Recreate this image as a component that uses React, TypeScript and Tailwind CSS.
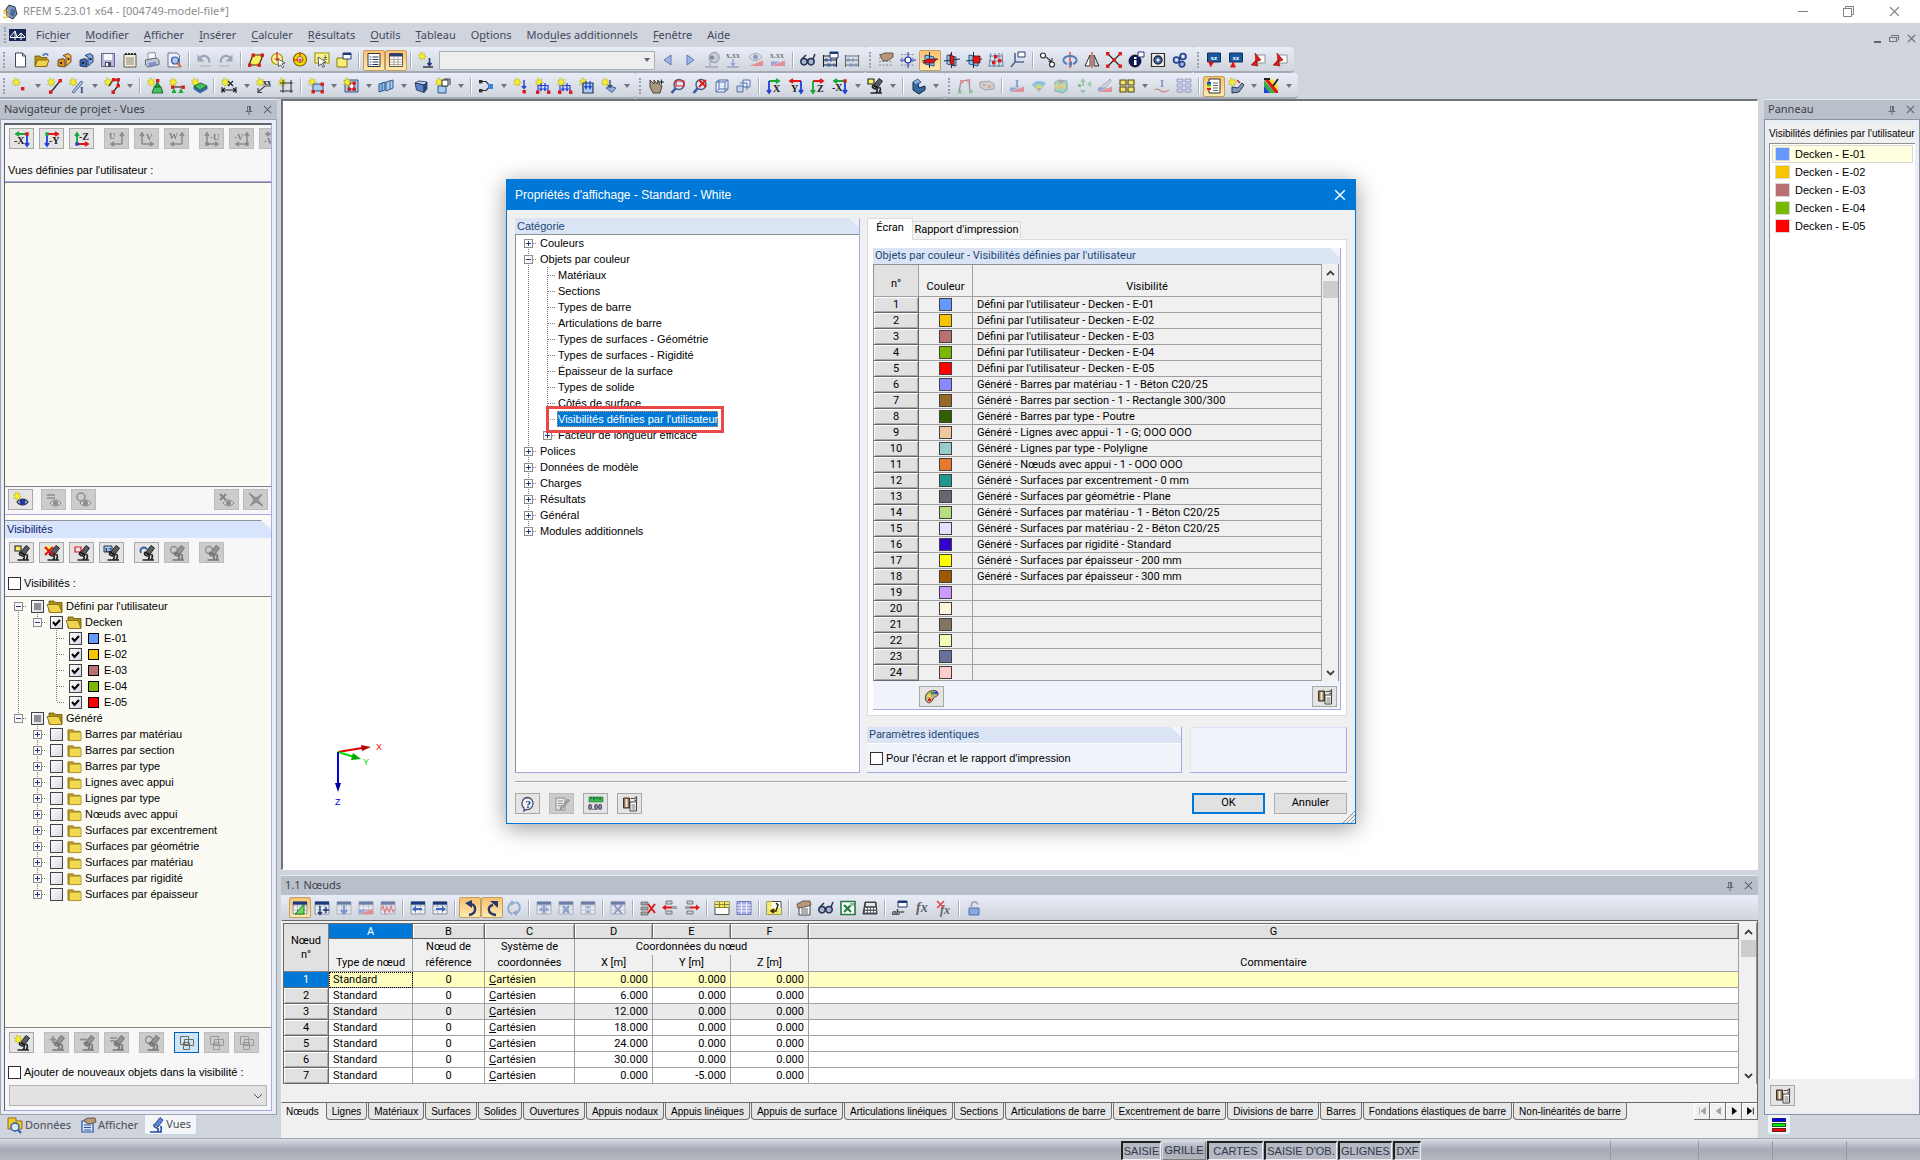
import type { ReactNode } from "react";

/* ---------- icon drawings: [path, fill, stroke, stroke width] on a 16×16 grid ---------- */
type Shape = [string, string?, string?, number?] | { t: string; x: number; y: number; c?: string; s?: number };

const RED = "#e01818";
const GRN = "#18a838";
const BLU = "#2040d8";
const NAVY = "#1c3a78";
const star: Shape = ["M4 0l.9 2.2 2.3-.9-.9 2.2 2.1 1-2.2.8.7 2.3L4.8 6.5 3.6 8.3 3 6.1.7 6.4 2 4.5.2 3l2.3-.2L2.3.6z", "#f7ef2c", "#b0a820", 0.5];
const n = (x: number, y: number, c = RED): Shape => [`M${x} ${y}h3.4v3.4h-3.4z`, c];
const ln = (d: string, c = "#404040", w = 1.3): Shape => [d, "none", c, w];
const tx = (t: string, x: number, y: number, c = "#202020", s = 8): Shape => ({ t, x, y, c, s });
const grid: Shape[] = [["M1 2h14v12H1z", "#f2f3f6", "#8a8f9a", 1], ln("M1 6h14M1 10h14M5.5 3v11M10.5 3v11", "#a6abb8", 0.8), ["M1 1.5h14v3.2H1z", NAVY]];
const scope: Shape[] = [["M12 .5l3.5 2.5-5 7-4-2.5z", "#585c60", "#181818", 0.9], ln("M6.5 7.5l5 3", "#101010", 1.8), ln("M6.500 7c-2.5 2 0 3.500 2.500 4 2 .8 1.5 2.5 0 3.5M12.500 9c1.500 2 1 4-.5 6M3.500 15h11.500", "#202428", 1.7)];
const fold: Shape[] = [["M1 3h5.5l1 1.500H14V14H1z", "#c8a018", "#7a6820", 0.8], ["M2.500 5.500H15V14.500H2.500z", "#f2da50", "#a08828", 0.8]];
const dots: Shape = ["M1 2.5h14M1 6h14M1 9.5h14M1 13h14", "none", "#85898f", 1];
const beam: Shape[] = [["M1 14l14-5.5V14z", "#e86060"], ["M1 14V9.5h9z", "#6a80d8"]];
const cubeBlue: Shape[] = [["M2 5l4-2 8 1-3 3z", "#bcd4f4", "#203050", 0.8], ["M2 5l9 2v7.5L3.5 12z", "#5a86c8", "#203050", 0.8], ["M11 7l3-3v7l-3 3.5z", "#2c4c88", "#203050", 0.8]];
const loads: Shape[] = [ln("M3 14V7.5h10V14", BLU, 1.2), ln("M6 5v7M10 5v7M4.5 10.5L6 12.5l1.5-2M8.5 10.5l1.5 2 1.5-2", BLU, 1.2), n(1, 12.5), n(12, 12.5)];
const lens: Shape[] = [["M9 1.5a5 5 0 1 1 0 10 5 5 0 0 1 0-10z", "#dbe8fa", "#485878", 1.4], ln("M5.5 10.5L1.5 15", "#3858b0", 2.6)];
const plane: Shape[] = [["M3 3l9 2v9l-9-2z", "#8cc8f0", "#205888", 1], ln("M7.5 0v16M0 9l16-2", "#103050", 1)];
const abacus: Shape[] = [ln("M1.5 3v12M14.5 3v12M1 8h14M1 13h14M1 4h14", "#202020", 1.1), ["M3 6.5h3v3H3zM8 6.5h2v3H8zM11 11.5h2v3h-2zM5 11.5h4v3H5z", "#4868a8"]];
const arrL = (x: number, y: number, c: string): Shape => [`M${x} ${y}l4-3v2h6v2h-6v2z`, c];
const eye: Shape[] = [["M4 11c3-4 8-4 11 0-3 4-8 4-11 0z", "#dcdcdc", "#404040", 1], ["M9.5 8.5a2.5 2.5 0 1 1 0 5 2.5 2.5 0 0 1 0-5z", "#505050"]];

const I: Record<string, Shape[]> = {
  newdoc: [["M3.5 1h7l3 3v11h-10z", "#fff", "#404858", 1], ln("M10.5 1v3h3", "#404858", 1)],
  open: [["M1 4h5l1 1.5h6V14H1z", "#b89018", "#705800", 0.8], ["M3.5 8H15l-2.5 6.5H1z", "#f0d050", "#705800", 0.8], ln("M9 4c1-3 4-3 5-.5", "#4068b0", 1.6)],
  boxo: [["M2 8l5-1.5 2 1.5v7l-7-1z", "#d89028", "#503810", 0.8], ["M7 3.5l5-2 3 2V10l-5 4V5z", "#f0b050", "#503810", 0.8], ["M4 10h2v2H4zM11.5 6h2v2h-2z", "#402808"]],
  boxb: [["M2 8l5-1.5 2 1.5v7l-7-1z", "#4068b0", "#182848", 0.8], ["M7 3.5l5-2 3 2V10l-5 4V5z", "#80a8e8", "#182848", 0.8], ["M4 10h2v2H4zM11.5 6h2v2h-2z", "#101c38"]],
  save: [["M1.5 1.5h13v13h-13z", "#b8b4dc", "#68648c", 1], ["M4 2h8v6H4z", "#f6f6fc"], ["M5 10h6v4.5H5z", "#484860"], ["M6 11h2v3H6z", "#fff"]],
  sheet: [["M2 2.5h12V15H2z", "#f4f0e0", "#605840", 1], ln("M4 6h8M4 8h8M4 10h8M4 12h8", "#807860", 0.9), ln("M3 2h2M6 2h2M9 2h2M12 2h2", "#303030", 2)],
  print: [["M4 1l7-.5 1 6-8 1z", "#f4f6fa", "#707888", 0.8], ["M1.5 8l11-2 2.5 2.5v4L4 15l-2.5-2z", "#c4c8d4", "#505868", 0.9], ["M4 11l8-1.5V13l-7 1.5z", "#8090c8"]],
  preview: [["M2 1h9l2.5 2.5V15H2z", "#eef2f8", "#606878", 0.9], ["M9 5a3.5 3.5 0 1 1 0 7 3.5 3.5 0 0 1 0-7z", "#a8c8f0", "#3050a0", 1.2], ln("M11.5 11l3.5 4", "#d07030", 2)],
  undo: [ln("M4 5.5c5-4 10 0 9 5", "#9aa4b8", 2.2), ["M1.5 2.5v7h7z", "#9aa4b8"], ln("M4 14h11", "#b4bac8", 1.3)],
  redo: [ln("M12 5.5c-5-4-10 0-9 5", "#9aa4b8", 2.2), ["M14.5 2.5v7h-7z", "#9aa4b8"], ln("M1 14h11", "#b4bac8", 1.3)],
  selpar: [["M5 3h10l-4 10H1z", "#f6f060", "#303008", 1.2], n(3.5, 1.5), n(12.5, 1.5), n(0, 11.5), n(9.5, 11.5)],
  selcirc: [["M7 1.5a5.5 5.5 0 1 1 0 11 5.5 5.5 0 0 1 0-11z", "#fbf59a", "#a09000", 1.2], ln("M7 0v5M4.5 7h5M7 5v4", RED, 1.2), ["M8 7l7 4-3 .8 2 3-1.5 1-2-3-2 2z", "#fff", "#404040", 0.8]],
  selring: [["M8 1a6.5 6.5 0 1 1 0 13A6.5 6.5 0 0 1 8 1z", "#f6d800", "#806800", 1.2], ["M8 4.5a3 3 0 1 1 0 6 3 3 0 0 1 0-6z", "#fff", "#806800", 1], ln("M8 0v4M1 8h5M8 6v4M6 8h5", RED, 1.1)],
  selbox: [["M1 1h14v10H1z", "#fbf59a", "#a09800", 1.2], ["M4 5l8 5-3.5 1 2 3.5-1.5.8-2-3.4-2.3 2z", "#fff", "#303030", 0.8], tx("±", 9, 8)],
  selyel: [["M1 6h10v9H1z", "#f8f070", "#807810", 1], ["M7 1h8v6H7z", "#fff", "#303878", 1], ["M7 1h8v2H7z", NAVY]],
  tlist: [["M2 1.5h12v13H2z", "#fff", "#303848", 1], ln("M6.5 5h6M6.5 7.5h6M6.5 10h6M6.5 12.5h6", "#303848", 1), ln("M3.5 5h2M3.5 7.5h2M3.5 10h2M3.5 12.5h2", "#3868c0", 1.2)],
  ttab: [["M1.5 1.5h13v13h-13z", "#fff", "#605848", 1], ["M1.5 1.5h13v3h-13z", "#28406c"], ln("M2 7.5h12.5M2 10h12.5M2 12.5h12.5M6 5v9.5M10 5v9.5", "#a09888", 0.8)],
  loadnew: [star, ln("M11.5 6v7M9.5 11l2 2.5 2-2.5", NAVY, 1.6), ln("M5 15h10", "#303030", 1.4)],
  tril: [["M11 3v10L4 8z", "#a0b4e0", "#6078b8", 1]],
  trir: [["M5 3v10l7-5z", "#a0b4e0", "#6078b8", 1]],
  eyep: [["M8 1a5 5 0 1 1 0 9 5 5 0 0 1 0-9z", "#b8c0cc", "#707888", 1.2], ["M8 3.5a2 2 0 1 1 0 4 2 2 0 0 1 0-4z", "#404858"], ln("M6 10v4M1 15h13", "#808898", 1.3)],
  xxl: [tx("x.xx", 0, 5.5, "#303030", 8), ln("M7 7v6M5 11l2 2.5 2-2.5M1 15h12", "#6880b8", 1.3)],
  eyeb: [["M1 5c4-5 9-5 13 0-4 5-9 5-13 0z", "#d4dae4", "#808898", 1], ["M7.5 2.5a2.5 2.5 0 1 1 0 5 2.5 2.5 0 0 1 0-5z", "#5870a8"], ...beam.slice(0, 1)],
  xxb: [tx("x.xx", 0, 6, "#303030", 8), ...beam],
  glasses: [["M4 6.5a3.2 3.2 0 1 1 0 6.4 3.2 3.2 0 0 1 0-6.4zM11 6.5a3.2 3.2 0 1 1 0 6.4 3.2 3.2 0 0 1 0-6.4z", "#a8b4d0", "#283050", 1.5], ln("M2 7l4-4M13 7l2-5", "#283050", 1.5)],
  abacus,
  abacusn: [...abacus, ["M8 0h8v6H8z", "#fff", NAVY, 1], ["M8 0h8v2H8z", NAVY]],
  handgrid: [dots, ["M2 3l5-2h8v4l-4 3-6 1z", "#b89878", "#504030", 0.8]],
  snap: [dots, ln("M8 0v16M0 8h16", "#2030a8", 1), ["M8 5a3 3 0 1 1 0 6 3 3 0 0 1 0-6z", "#fff", "#2030a8", 1.2]],
  pl1: [...plane, ["M1 11l4-4h10l-4 4z", RED, "#601010", 0.8]],
  pl2: [...plane, ["M6 2l4 3v9l-4-3z", RED, "#601010", 0.8]],
  pl3: [...plane, ["M7 4h7v7H7z", RED, "#601010", 0.8]],
  net: [ln("M3 1l-2 14M7 1L6 15M11 1v14M14 1l1 14M1 4h13M1 9h14M1 14h14", "#5080a8", 0.9), n(6, 3), n(10, 7), n(4, 9)],
  axes: [ln("M5 1v9h9M5 10l-4 5", "#506890", 1.6), ["M8 0h7v5H8z", "#fff", "#303878", 1]],
  moveo: [["M3 1a2.5 2.5 0 1 1 0 5 2.5 2.5 0 0 1 0-5zM12 10a2.5 2.5 0 1 1 0 5 2.5 2.5 0 0 1 0-5z", "#fff", "#303030", 1.2], ln("M6 5l5 4M12 6v3.5H8.5", "#303030", 1.1)],
  rot: [ln("M8 0v16", RED, 1.1), ln("M5 12C-1 10 1 4 8 4s9 6 3 8", "#5080b8", 2), ["M10 9v5.5l-4-2.5z", "#5080b8"]],
  mirror: [ln("M8 0v16", RED, 1.1), ["M6 3v11H1z", "#fff", "#303030", 1], ["M10 3v11h5z", "#d0d0d0", "#303030", 1]],
  cross: [ln("M2 2l12 12M14 2L2 14", "#202020", 1.2), n(0, 0), n(12.5, 0), n(0, 12.5), n(12.5, 12.5), n(6.5, 6.5)],
  info: [["M7 3a6 6 0 1 1 0 12A6 6 0 0 1 7 3z", "#101858", "#000", 0.8], ["M6 8h2.5v5H6zM6 5h2.5v2H6z", "#fff"], ["M10 0h6v5h-6z", "#fff", "#303878", 1]],
  gearp: [["M1.5 1.5h13v13h-13z", "#f0ece0", "#303030", 1.2], ["M8 4a4 4 0 1 1 0 8 4 4 0 0 1 0-8z", "#4868a8", "#182848", 1.4], ["M8 6.5a1.5 1.5 0 1 1 0 3 1.5 1.5 0 0 1 0-3z", "#fff"]],
  gears: [["M11 1.5a3 3 0 1 1 0 6 3 3 0 0 1 0-6zM4.5 5a3 3 0 1 1 0 6 3 3 0 0 1 0-6zM10 9.5a2.7 2.7 0 1 1 0 5.4 2.7 2.7 0 0 1 0-5.4z", "#a0b4e0", "#28408c", 1.6], ["M10 3.5h2v2h-2zM3.5 7h2v2h-2z", "#fff"]],
  rx1: [["M1.5 1h13v9h-13z", "#1858a0", "#0c3060", 1], tx("xz", 4.5, 7.5, "#fff", 7), ["M2 9l6 1-3.5 5.5z", RED]],
  rx2: [["M1.5 1h13v9h-13z", "#1858a0", "#0c3060", 1], tx("xz", 4.5, 7.5, "#fff", 7), ["M8 15.5H2L5 9z", RED]],
  rx3: [["M7 3h8v8H7z", "#fff", "#909090", 1], ["M5 1l6 7-5 2zM1 13l5-5 2 6z", RED, "#801010", 0.6]],
  node: [star, n(9, 9)],
  line: [star, ln("M4 14L13 3", "#303030", 1.4), n(11.5, 1), n(2, 12.5)],
  member: [star, ["M3 14L12 3l2 1.5L5 15z", "#a8c4ec", "#385888", 0.8], tx("I", 11, 15, NAVY, 9)],
  poly: [star, ln("M5 8l4-6h5v6l-5 6", "#303030", 1.3), n(8, 0), n(12.5, 0), n(12.5, 6), n(7.5, 12.5)],
  sup: [star, n(9, 1), ["M10.5 4l3 5h-6z", GRN, "#0c5820", 0.8], ["M7 9h7l2 6H5z", "#48c060", "#0c5820", 0.8]],
  sup2: [star, ln("M3 9h12", "#303030", 1.2), n(2, 7.5), n(12.5, 7.5), ["M5 10l2.5 5h-5zM12 10l2.5 5h-5z", GRN]],
  surfs: [star, ["M3 8v3l6 4 7-4V8l-7 4z", "#3870c0", "#0c3060", 0.6], ["M3 8l7-3 6 3-7 4z", "#48c060", "#0c5820", 0.8]],
  dim: [star, ln("M1 9v6M15 9v6M1 12h14M4 10l-3 2 3 2M12 10l3 2-3 2", "#202020", 1.1), ln("M7 3l5 5M12 3L7 8", "#202020", 1.2)],
  xx: [star, tx("xx", 7, 7), ln("M15 8H9l-7 6M2 10v4.5h4", "#404040", 1.1)],
  frame: [star, ln("M5 2v13M13 2v13M2 5h13M2 13h13", "#303030", 1)],
  surf: [star, ["M5 6h10v7H5z", "#a8ccf0", "#305888", 1], n(3.5, 12), n(12.5, 4.5), n(12.5, 12)],
  opening: [["M2 2h13v12H2z", "#a8ccf0", "#305888", 1], ["M6 5h5v6H6z", "#fff", "#303030", 1], n(4.5, 3.5), n(9.5, 3.5), n(4.5, 9.5), n(9.5, 9.5), star],
  inter: [["M1 6l6-2v8l-6 2z", "#88b8e8", "#305888", 1], ["M8 4l7-2v8l-7 3z", "#a8ccf0", "#305888", 1], ln("M4 5v8M12 3v8", "#305888", 0.8)],
  solid: cubeBlue,
  solidn: [star, ["M3 8h8v7H3z", "#a8ccf0", "#305888", 1], ["M7 2h6v6H7z", "#fff", "#303030", 1], ln("M9 1h6v6", "#303030", 1)],
  rig: [n(1, 2, "#303030"), n(1, 11, "#303030"), ln("M4 3.5h4l4 4.5M4 12.5h4l3-3", "#303030", 1.2), ["M10 6h5v5h-5z", "#4080d8"]],
  nload: [star, ln("M11 2v8M9 8l2 2.5L13 8", BLU, 1.4), n(9.5, 12)],
  mload: [star, ...loads],
  sload: [...loads, star],
  ssload: [star, ["M4 5h10v10H4z", "#a8ccf0", "#203858", 1.2], ln("M7 3v7M11 3v7M5.5 8L7 10.5 8.5 8M9.5 8l1.5 2.5L12.5 8", BLU, 1.2)],
  gload: [star, ["M5 10l4-2 6 2-4 4.5z", "#90b0e0", "#304878", 0.8], ln("M9 2v7M7 7l2 2.5L11 7", "#304878", 1.3)],
  hand: [["M2 2l4 4V2l3 4 1-4 2 5 2 1-2 7H5L2 9z", "#a89880", "#403830", 0.9], ln("M11 4h5M13.5 1.5v5", "#202020", 1)],
  zoomr: [...lens, ["M6 3h8v5H6z", "none", RED, 1.2]],
  zoomx: [...lens, ln("M7 2l7 7M14 2L7 9", RED, 1.8)],
  cubew: [["M2 4l3-2h9v9l-3 3H2z", "#e4eefa", "#5870a8", 1], ln("M2 4h9v10M11 4l3-2M5 2v9h9M5 11l-3 3", "#5870a8", 1)],
  cubes: [["M7 2h7v7H7z", "#e4eefa", "#5870a8", 1], ["M1 8h6v6H1z", "#c4d4ec", "#5870a8", 1], ln("M4 5h7v7", "#5870a8", 1)],
  vx: [ln("M3 3h9M10 1l3 2-3 2", GRN, 1.8), ln("M3 3v11M1 12l2 3 2-3", BLU, 1.8), tx("X", 7, 14, "#202020", 10)],
  vy: [ln("M13 3H3M5 1L2 3l3 2", RED, 1.8), ln("M13 3v11M11 12l2 3 2-3", BLU, 1.8), tx("Y", 3, 14, "#202020", 10)],
  vz: [ln("M3 3h9M10 1l3 2-3 2", RED, 1.8), ln("M3 3v11M1 12l2 3 2-3", GRN, 1.8), tx("Z", 7, 14, "#202020", 10)],
  vmx: [ln("M13 3H3M5 1L2 3l3 2", GRN, 1.8), ln("M13 3v11M11 12l2 3 2-3", BLU, 1.8), n(11.3, 1.3), tx("-X", 0, 13, "#202020", 10)],
  vmy: [ln("M3 3h10M11 1l3 2-3 2", RED, 1.8), ln("M3 3v11M1 12l2 3 2-3", BLU, 1.8), n(1.3, 1.3, GRN), tx("-Y", 5, 13, "#202020", 10)],
  vmz: [ln("M3 13V3M1 5l2-3 2 3", GRN, 1.8), ln("M3 13h10M11 11l3 2-3 2", RED, 1.8), n(1.3, 11.3, BLU), tx("-Z", 5, 9, "#202020", 10)],
  gu: [tx("U", 0, 8, "#303030", 9), ln("M13 13V3M11 5l2-3 2 3M13 13H3M5 11l-3 2 3 2", "#505050", 1.6)],
  gv: [tx("V", 7, 9, "#303030", 9), ln("M3 13V3M1 5l2-3 2 3M3 13h10M11 11l3 2-3 2", "#505050", 1.6)],
  gw: [tx("W", 0, 8, "#303030", 9), ln("M13 13V3M11 5l2-3 2 3M13 13H3M5 11l-3 2 3 2", "#505050", 1.6)],
  gmu: [tx("-U", 6, 9, "#303030", 9), ln("M3 13V3M1 5l2-3 2 3M3 13h10M11 11l3 2-3 2", "#505050", 1.6), n(1.3, 11.3, "#404040")],
  gmv: [tx("-V", 0, 9, "#303030", 9), ln("M13 13V3M11 5l2-3 2 3M13 13H3M5 11l-3 2 3 2", "#505050", 1.6), n(11.3, 11.3, "#404040")],
  gmw: [ln("M13 3H3M5 1L2 3l3 2", "#505050", 1.6), tx("-W", 0, 13, "#303030", 9)],
  scope: [["M1 1h6v5H1z", "#f8f060", "#202020", 1.1], ...scope],
  scopex: [["M1 1h6v5H1z", "#f8f060"], ...scope, ln("M1 2l8 8M9 2l-8 8", RED, 2.2)],
  scoper: [["M1 2h6v5H1z", "none", RED, 1.2], ...scope],
  scope12: [["M0 1h8v6H0z", "#a8ccf0", "#203858", 1], tx("12", 0.5, 6.5, "#102040", 7), ...scope],
  scopec: [ln("M2 8c-2-5 3-7 6-4", "#2858a8", 1.8), ...scope],
  scopeo: [["M5 1.5a3.5 3.5 0 1 1 0 7 3.5 3.5 0 0 1 0-7z", "none", "#505050", 1.3], ...scope],
  scopen: [...scope, star],
  scopep: [ln("M4 1v7M1 4.5h6", "#505050", 1.8), ...scope],
  scopem: [ln("M1 4.5h7", "#505050", 1.8), ...scope],
  scopee: [ln("M1 3h7M1 6h7", "#505050", 1.6), ...scope],
  scopeb: [["M12 .5l3 2.500-5 7-3.500-2.500z", "#5888d8", "#183878", 0.8], ln("M6.5 7c-2 2 .5 3.5 2.5 4 2 1 1.5 2.5 0 3.5M12.500 9c1.500 2 1 4-.5 6M2 15h12", "#2850a0", 1.6)],
  eyen: [["M4 10c3-4 8-4 11 0-3 4-8 4-11 0z", "#dce4f0", "#202840", 1.2], ["M9.5 7a3 3 0 1 1 0 6 3 3 0 0 1 0-6z", "#2038a0"], star],
  eyee: [ln("M1 3h8M1 6h8", "#505050", 1.5), ...eye],
  eyeo: [["M5 1a4 4 0 1 1 0 8 4 4 0 0 1 0-8z", "none", "#505050", 1.5], ...eye],
  eyex: [ln("M1 2l6 6M7 2L1 8", "#404040", 2), ...eye],
  bigx: [["M1 1l7 5 6-4-4 6 5 6-7-4-6 4 4-6z", "#606060", "#303030", 0.8]],
  layers: [["M1.5 1.5h8v8h-8z", "none", "#706c60", 1], ["M5.5 4.5h9v6h-9z", "none", "#706c60", 1], ["M4.5 7.5h6v7h-6z", "none", "#706c60", 1]],
  rotb: [["M3 4l5-3 3 3-3 2 1 4 6-2v4l-6 4-6-4z", "#3868a0", "#102848", 1], ["M3 4l5-3 3 3-5 2z", "#80b0e0"]],
  zig: [ln("M2 14L4 3l8-1 1 12", "#606060", 1.3), n(1, 12, "#58b068"), n(3, 2, "#e06060"), n(10, 1, "#e06060"), n(12, 12, "#58b068")],
  chip: [["M1 4l9-1 5 3v5l-9 1-5-3z", "#c8c4c0", "#807c78", 1], ["M4 6h3v2H4zM9 7h3v3H9z", "#e08060"]],
  ibeam: [tx("I", 6, 9, "#4868a8", 11), ...beam],
  rainb: [["M1 7c3-5 9-5 14-2l-7 9z", "#60a0e8"], ["M3 8c3-3 7-3 10 0l-5 5z", "#70d870"], ["M5 9c2-2 4-2 6 0l-3 4z", "#f0d040"], ["M7 10h3l-2 3z", "#e06050"]],
  heat: [["M2 4l4-2 8 1v9l-4 3-8-2z", "#70d0b0", "#587880", 0.9], ["M4 6a2 2 0 1 1 0 5 2 2 0 0 1 0-5zM10 6a2 2 0 1 1 0 5 2 2 0 0 1 0-5z", "#f0c040"], ["M6 3h4v2H6z", "#e06050"]],
  garr: [["M8 0l3 4H9v4H7V4H5zM8 16l-3-4h6zM12 6l4-3v6z", "#70b880"], ["M3 6h3v3H3z", "#50a060"]],
  blade: [["M3 10L13 1l1 2-7 8z", "#c8d0dc", "#707888", 0.9], ...beam],
  four: [["M1 2h6v5H1zM9 2h6v5H9zM1 9h6v5H1zM9 9h6v5H9z", "#f4e070", "#504810", 1.1]],
  isec: [tx("I", 6, 9, "#4868a8", 11), ln("M1 12c4-4 6 6 14 0", "#d05050", 1.2)],
  stack: [["M1 1h6v3H1zM9 1h6v3H9zM1 6h6v3H1zM9 6h6v3H9zM1 11h6v3H1zM9 11h6v3H9z", "#c8d0f0", "#6870a8", 1]],
  legend: [["M3 1h11v14H3z", "#fff", "#303030", 1], ["M1 4h4v2H1z", "#2040e0"], ["M1 6h4v2H1z", "#20c040"], ["M1 8h4v2H1z", "#f0e020"], ["M1 10h4v2H1z", RED], ln("M7 5h5M7 7.5h5M7 10h5M7 12.5h5", "#606060", 1)],
  spray: [star, ["M4 9l6 1 4-5 2 2-5 7-7 1z", "#8098c0", "#303848", 1], ln("M9 2l3 3", RED, 1.4)],
  results: [["M5 1h4l6 7v5z", "#f8e020"], ["M1 1h4l10 12v2h-3z", RED], ["M1 2l11 13H7L1 8z", "#30b040"], ["M1 8l6 7H1z", "#2040e0"], ln("M1 1h6M15 1l-5 7", "#202020", 1.8)],
  tedit: [...grid, ["M3 14L12 4v10z", "#70d860", "#207820", 1]],
  tins: [...grid, ln("M6 6v8M4 12l2 2.5L8 12M9 10h6M12 7v6", NAVY, 1.4)],
  tdown: [...grid, ln("M8 5v8M5 10l3 3.5 3-3.5", "#3868c0", 2)],
  tbeam: [...grid, ...beam],
  twave: [...grid, ln("M1 10l2-4 2 7 2-6 2 5 2-6 2 6 2-3", "#d84848", 1.2)],
  tleft: [...grid, arrL(2, 9, "#3868c0")],
  tright: [...grid, ["M14 9l-4-3v2H4v2h6v2z", "#3868c0"]],
  uo: [ln("M7 15c7-1 8-8 3-11", "#283868", 2.4), ["M10 0v8L3 3z", "#283868"]],
  uo2: [ln("M12 15c-9-1-9-9-3-10", "#283868", 2.4), ["M6 1h8v7z", "#283868"]],
  refr: [ln("M6 14C0 11 2 4 6 3M10 2c6 3 4 10 0 11", "#6888b8", 2), ["M5 0l5 3-5 3zM11 10v6l-5-3z", "#6888b8"]],
  tplus: [...grid, ln("M8 5v9M3.5 9.5h9", "#5878c0", 2.4)],
  tmul: [...grid, ln("M5 6l6 7M11 6l-6 7", "#5878c0", 2.4)],
  tdiv: [...grid, ["M6.5 6h3v2.5h-3zM6.5 10.5h3V13h-3z", "#5878c0"]],
  tclr: [...grid, ln("M4 5l8 9M12 5l-8 9", "#4860a8", 1.6)],
  rdel: [["M1 2h7v3H1zM1 7h7v3H1zM1 12h7v3H1z", "#a0a4ac", "#505050", 0.6], ln("M8 4l7 9M15 4l-7 9", RED, 2)],
  rl: [["M4 1h6v3H4zM4 11h6v3H4z", "#d0d0d4", "#606060", 0.8], ["M10 6h5v3h-5z", "#a0a0a4"], arrL(0, 7.5, RED)],
  rr: [["M3 1h6v3H3zM3 11h6v3H3z", "#d0d0d4", "#606060", 0.8], ["M1 6h5v3H1z", "#a0a0a4"], ["M16 7.5l-4-3v2H6v2h6v2z", RED]],
  yrows: [["M1 1.5h14v13H1z", "#fff", "#505040", 1], ["M1 1.5h14v6H1z", "#f0e868"], ln("M1 4.5h14M1 7.5h14M5.5 2v6M10.5 2v6", "#807830", 0.9)],
  brows: [["M1 1.5h14v13H1z", "#a0a8e0", "#7078b8", 1], ln("M1 5h14M1 8h14M1 11h14M5.5 2v12M10.5 2v12", "#fff", 0.9)],
  ycal: [["M1 1.5h14v13H1z", "#fff", "#505040", 1], ["M1 8h14v6.5H1zM1 1.5h5v6H1z", "#f0e868"], ln("M10 3l2 2-2 6H6M8 9l-3 2 3 2", "#302808", 1.5)],
  hlist: [["M3 5h11v10H3z", "#fff", "#404040", 1], ln("M5 9h7M5 11h7M5 13h7", "#606060", 1), ["M1 4l6-3h7l1 4-6 2-7 1z", "#b89878", "#504030", 0.8]],
  navlist: [["M2 4h11v11H2z", "#d8e8fc", "#2850a0", 1.2], ln("M4 8h7M4 10.500h7M4 13h7", "#2850a0", 1.1), ["M4 3l4-2h7l1 4-6 2-4-1z", "#b89878", "#504030", 0.8]],
  excel: [["M1 1.5h14v13H1z", "#fff", "#207840", 1.6], ln("M4 5l7 7M11 5l-7 7", "#208040", 2.2), ["M10 3h4v3h-4z", "#88c098"]],
  calc: [["M3 2h11l1 12H1z", "#606468", "#202020", 0.8], ["M4 3h9v3H4z", "#e4ece4"], ["M3 8h2v1.500H3zM6 8h2v1.500H6zM9 8h2v1.500H9zM12 8h2v1.500h-2zM3 11h2v1.500H3zM6 11h2v1.500H6zM9 11h2v1.500H9zM12 11h2v1.500h-2z", "#fff"]],
  ab: [["M6 1h9v6H6z", "#fff", NAVY, 1], ["M6 1h9v2H6z", NAVY], tx("ab=", 0, 15)],
  fx: [tx("fx", 2, 12, "#606468", 14)],
  fxx: [tx("fx", 4, 14, "#606468", 12), ln("M1 1l7 7M8 1L1 8", "#e04848", 1.6)],
  lock: [["M3 8h10v7H3z", "#88a8e0", "#5070b0", 1], ln("M5.5 8V5c0-4 6-4 6-.5", "#a0a8b8", 1.8)],
  palette: [["M2 6c2-5 11-6 12-2s-4 3-5 6-4 5-6 3-2-5-1-7z", "#c8b088", "#504028", 1], ["M7 3h3v2.5H7z", "#20a030"], ["M10.5 2.5h3V5h-3z", "#2040e0"], ["M3.5 5.5h3V8h-3z", "#f0e020"], ["M4 9.5h3V12H4z", RED]],
  copyp: [["M1.500 2h6v10h-6z", "#8c7458", "#403020", 1], ["M3.5 3h2v8h-2z", "#f4eee4"], ["M8 6h6.5v9H8z", "#fff", "#404040", 1], ln("M9.5 9h4M9.5 11h4M9.5 13h4", "#606060", 0.9), ln("M8.500 2.500h4l2-1.500v4l-2-1", "#505050", 1.2)],
  help: [["M8 1.5a6 6 0 1 1-2 12l-2 1.5v-3A6 6 0 0 1 8 1.5z", "#eef2fa", "#485068", 1.3], tx("?", 5.5, 11.5, "#203078", 11)],
  edit: [["M2 2h9v12H2z", "#fff", "#555", 1], ln("M4 5h5M4 7.5h4M4 10h4", "#555", 1), ["M14 3l1.5 1.5L8 13l-2 .8.6-2.4z", "#888478", "#444", 0.8]],
  units: [["M1 1h14v5H1z", "#40b858", "#207030", 0.6], ln("M3 1v2M6 1v3M9 1v2M12 1v3", "#0c4818", 0.9), tx("0.00", 0, 14, "#181848", 8)],
  nav1: [["M1 1h8v3h6v8H1z", "#f0c830", "#806808", 0.9], ["M8 6a4 4 0 1 1 0 8 4 4 0 0 1 0-8z", "#d8e8fa", "#2858b0", 1.4], ln("M11 13l3 3", "#2858b0", 2)],
  folderO: [["M2 3h5l1 1.500h7V14H2z", "#b09018", "#685008", 0.8], ["M0 6.5h12l3 8H3z", "#eed450", "#786010", 0.8]],
  folderC: fold,
  logo: [["M6 1l6 2 2 7-4 5-6-3-1-7z", "#8098b8", "#283850", 1], ["M8 5l5 1-2 7-4-2z", "#4868a0"], tx("5", 0, 14, "#d8a800", 12)],
};

function Icon({ k, className = "size-4" }: { k: string; className?: string }) {
  return (
    <svg viewBox="0 0 16 16" className={`shrink-0 overflow-visible ${className}`} aria-hidden="true">
      {(I[k] ?? []).map((s, i) =>
        Array.isArray(s) ? (
          <path key={i} d={s[0]} fill={s[1] ?? "none"} stroke={s[2] ?? "none"} strokeWidth={s[3] ?? 1} strokeDasharray={s === dots ? "2 1.5" : undefined} />
        ) : (
          <text key={i} x={s.x} y={s.y} fill={s.c} fontSize={s.s} fontFamily="'Liberation Serif', serif" fontWeight="bold" fontStyle={s.t === "fx" || s.t === "ab=" ? "italic" : undefined}>{s.t}</text>
        ),
      )}
    </svg>
  );
}

/* ---------- toolbars ---------- */
const Sep = () => <span className="mx-[3px] h-4 w-[2px] shrink-0 border-r border-white bg-[#a9b0bd]" />;
const Grip = () => <span className="mr-[3px] ml-[3px] h-4 w-[3px] shrink-0 border-l-2 border-dotted border-[#9aa1ae]" />;

/* "|" separator, "v" drop-down arrow, "*name" pressed, "~name" disabled */
function Tools({ items }: { items: string }) {
  return (
    <>
      {items.split(" ").map((raw, i) => {
        if (raw === "|") return <Sep key={i} />;
        if (raw === "v")
          return (
            <button key={i} className="flex h-5 w-[13px] shrink-0 items-center justify-center" aria-label="Plus d'options">
              <span className="border-x-[3px] border-t-4 border-x-transparent border-t-[#70757f]" />
            </button>
          );
        const on = raw[0] === "*";
        const off = raw[0] === "~";
        const k = on || off ? raw.slice(1) : raw;
        return (
          <button
            key={i}
            aria-label={k}
            className={`flex h-[21px] w-[22px] shrink-0 items-center justify-center ${on ? "rounded-[2px] border border-[#c0a060] bg-linear-to-b from-[#fcc070] to-[#fdeab0]" : ""}`}
          >
            <Icon k={k} className={off ? "size-4 opacity-60" : "size-4"} />
          </button>
        );
      })}
    </>
  );
}

function Bar({ items, children }: { items?: string; children?: ReactNode }) {
  return (
    <div className="flex h-[26px] items-center rounded-r-[4px] border-b-2 border-[#a4a9b3] bg-linear-to-b from-[#e9edf7] to-[#d0d4dd] pt-[2px] pr-[3px]">
      <Grip />
      {items ? <Tools items={items} /> : children}
    </div>
  );
}

const Pin = () => (
  <svg viewBox="0 0 10 10" className="size-[10px]" aria-hidden="true"><path d="M3.5 1v5M6.500 1v5M5.500 1v5M3 1.500h4M1.500 6.5h7M5 7v3" fill="none" stroke="#686c74" /></svg>
);
const Cross = ({ className = "size-[9px] stroke-[#60646c]" }: { className?: string }) => (
  <svg viewBox="0 0 10 10" className={className} aria-hidden="true"><path d="M1 1l8 8M9 1L1 9" fill="none" strokeWidth="1.2" /></svg>
);

function DockTitle({ children }: { children: ReactNode }) {
  return (
    <div className="flex h-5 shrink-0 items-center border-t border-[#e4e8f0] bg-[#b9c0ca] px-1 font-['Noto_Sans',sans-serif] text-[11px] text-[#3c4048]">
      <span className="flex-1 truncate">{children}</span>
      <button aria-label="Épingler" className="mr-1 flex size-4 items-center justify-center"><Pin /></button>
      <button aria-label="Fermer" className="flex w-3 items-center justify-center"><Cross /></button>
    </div>
  );
}

/* ---------- trees ---------- */
/* v: line through, t: tee, l: last, f: first, blank: empty column */
type G = "v" | "t" | "l" | "f" | " ";
function Guide({ g, box }: { g: G; box?: "+" | "-" }) {
  const top = g === "v" || g === "t" || g === "l";
  const bot = g === "v" || g === "t" || g === "f";
  return (
    <svg viewBox="0 0 19 16" className="h-4 w-[19px] shrink-0" aria-hidden="true">
      <g stroke="#7c7c7c" strokeDasharray="1 1" fill="none">
        {top && <path d="M9.5 0V8" />}
        {bot && <path d="M9.5 8V16" />}
        {g !== "v" && g !== " " && <path d="M10 8.5H17" />}
      </g>
      {box && (
        <>
          <rect x="5.5" y="4.5" width="8" height="8" fill="#f8f8f8" stroke="#8c8c8c" />
          <path d={box === "+" ? "M7 8.5H12M9.5 6V11" : "M7 8.5H12"} stroke="#283c88" />
        </>
      )}
    </svg>
  );
}

const gens = ["Barres par matériau", "Barres par section", "Barres par type", "Lignes avec appui", "Lignes par type", "Nœuds avec appui", "Surfaces par excentrement", "Surfaces par géométrie", "Surfaces par matériau", "Surfaces par rigidité", "Surfaces par épaisseur"];
const floors: [string, string][] = [["E-01", "bg-[#6699ff]"], ["E-02", "bg-[#f8c400]"], ["E-03", "bg-[#b87070]"], ["E-04", "bg-[#78b800]"], ["E-05", "bg-[#ff0000]"]];

function Box({ state, label }: { state: "on" | "mixed" | "off"; label: string }) {
  return (
    <span className="relative ml-[3px] flex size-[13px] shrink-0">
      <input
        type="checkbox"
        aria-label={label}
        defaultChecked={state === "on"}
        className="size-[13px] appearance-none border border-[#404448] bg-linear-to-br from-white to-[#d4d8e0]"
      />
      {state === "on" && (
        <svg viewBox="0 0 13 13" className="pointer-events-none absolute inset-0"><path d="M3 6l2.5 3L10 4" fill="none" stroke="#000" strokeWidth="2" /></svg>
      )}
      {state === "mixed" && <span className="pointer-events-none absolute inset-[3px] bg-[#909090]" />}
    </span>
  );
}

function NavRow({ guides, box, state, icon, label }: { guides: G[]; box?: "+" | "-"; state: "on" | "mixed" | "off"; icon: ReactNode; label: string }) {
  return (
    <div className="flex h-4 items-center">
      {guides.map((g, i) => <Guide key={i} g={g} box={i === guides.length - 1 ? box : undefined} />)}
      <Box state={state} label={label} />
      <span className="flex w-[22px] shrink-0 items-center justify-center">{icon}</span>
      <span className="whitespace-nowrap">{label}</span>
    </div>
  );
}

function Btn({ k, off, sel }: { k: string; off?: boolean; sel?: boolean }) {
  return (
    <button
      aria-label={k}
      disabled={off}
      className={`flex h-[21px] w-[25px] shrink-0 items-center justify-center border ${sel ? "border-[#0060b0] bg-[#cce4f7]" : off ? "border-[#bcbcbc] bg-[#cccccc]" : "border-[#a8a8a8] bg-[#e4e4e4]"}`}
    >
      <Icon k={k} className={off ? "size-4 opacity-50 grayscale" : "size-4"} />
    </button>
  );
}

function Check({ label }: { label: string }) {
  return (
    <label className="flex items-center gap-[3px] whitespace-nowrap">
      <input type="checkbox" className="size-[13px] appearance-none border border-[#303030] bg-white" />
      {label}
    </label>
  );
}

function Navigator() {
  return (
    <aside className="flex w-[277px] shrink-0 flex-col">
      <DockTitle>Navigateur de projet - Vues</DockTitle>
      <div className="flex min-h-0 flex-1 flex-col border border-[#9ca3b0] bg-[#e9edf5] pt-[3px] pr-[4px] pb-[3px] pl-[3px]">
        <div className="flex min-h-0 flex-1 flex-col border-t-2 border-r border-l border-[#606468] border-r-[#a8a8e8] bg-[#f7f7f7] font-['Liberation_Sans',sans-serif] text-[11px] text-black">
          <div className="flex gap-[5px] overflow-hidden pt-[3px] pl-1">
            <Btn k="vmx" /><Btn k="vmy" /><Btn k="vmz" />
            <span className="w-0" /><Btn k="gu" off /><Btn k="gv" off /><Btn k="gw" off />
            <span className="w-0" /><Btn k="gmu" off /><Btn k="gmv" off /><Btn k="gmw" off />
          </div>
          <div className="flex h-[33px] shrink-0 items-center border-b border-[#a8a8e8] pt-[10px] pl-[3px]">Vues définies par l'utilisateur :</div>
          <div className="h-[305px] shrink-0 border-y border-[#808488] bg-[#fbfbf3]" />
          <div className="flex h-[28px] shrink-0 gap-2 border-b border-[#a8a8e8] px-[3px] pt-[2px]">
            <Btn k="eyen" /><div className="flex gap-[5px]"><Btn k="eyee" off /><Btn k="eyeo" off /></div>
            <span className="flex-1" />
            <div className="flex gap-1"><Btn k="eyex" off /><Btn k="bigx" off /></div>
          </div>
          <div className="h-[5px] shrink-0 bg-[#fbfbf3]" />
          <div className="flex h-[18px] shrink-0 items-center border-t border-[#909498] bg-[#d9e4fd] pl-[2px] text-[#101c70] [clip-path:polygon(0_0,calc(100%-10px)_0,100%_10px,100%_100%,0_100%)]">Visibilités</div>
          <div className="flex gap-[5px] pt-1 pl-1">
            <Btn k="scope" /><Btn k="scopex" /><Btn k="scoper" /><Btn k="scope12" />
            <span className="w-0" /><Btn k="scopec" /><Btn k="scopeo" off /><span className="w-0" /><Btn k="scopeo" off />
          </div>
          <div className="flex h-[33px] shrink-0 items-center pt-[8px] pl-[3px]"><Check label="Visibilités :" /></div>
          <div className="min-h-0 flex-1 overflow-hidden border-y border-[#808488] bg-[#fbfbf3] pt-px pl-1">
            <NavRow guides={["f"]} box="-" state="mixed" icon={<Icon k="folderO" />} label="Défini par l'utilisateur" />
            <NavRow guides={["v", "l"]} box="-" state="on" icon={<Icon k="folderO" />} label="Decken" />
            {floors.map(([f, c], i) => (
              <NavRow key={f} guides={["v", " ", i === 4 ? "l" : "t"]} state="on" icon={<span className={`ml-px size-[11px] border border-black ${c}`} />} label={f} />
            ))}
            <NavRow guides={["l"]} box="-" state="mixed" icon={<Icon k="folderO" />} label="Généré" />
            {gens.map((g, i) => (
              <NavRow key={g} guides={[" ", i === gens.length - 1 ? "l" : "t"]} box="+" state="off" icon={<Icon k="folderC" className="size-[15px]" />} label={g} />
            ))}
          </div>
          <div className="flex gap-[5px] pt-1 pl-1">
            <Btn k="scopen" /><span className="w-0" /><Btn k="scopep" off /><Btn k="scopem" off /><Btn k="scopee" off />
            <span className="w-0" /><Btn k="scopeo" off /><span className="w-0" /><Btn k="layers" sel /><Btn k="layers" off /><Btn k="layers" off />
          </div>
          <div className="flex h-[30px] shrink-0 items-center pt-[9px] pl-[3px]"><Check label="Ajouter de nouveaux objets dans la visibilité :" /></div>
          <div className="relative mx-1 mt-[2px] mb-1">
            <select aria-label="Visibilité" className="block h-[21px] w-full appearance-none border border-[#b4b4b4] bg-[#e2e2e2]" />
            <svg viewBox="0 0 10 6" className="pointer-events-none absolute top-2 right-1 h-[6px] w-[10px]"><path d="M1 1l4 4 4-4" fill="none" stroke="#505050" /></svg>
          </div>
          <div className="border-t border-[#a8a8e8]" />
        </div>
      </div>
      <div className="flex h-[23px] items-start gap-px pl-1 font-['Noto_Sans',sans-serif] text-[11px] text-[#484c54]">
        {[["nav1", "Données"], ["navlist", "Afficher"], ["scopeb", "Vues"]].map(([k, t], i) => (
          <button key={t} className={`flex h-5 items-center gap-[2px] pr-[5px] pl-[3px] ${i === 2 ? "rounded-b-[3px] border border-t-0 border-[#c0d8e0] bg-[#f4f5f8]" : ""}`}>
            <Icon k={k} />{t}
          </button>
        ))}
      </div>
    </aside>
  );
}

/* ---------- nodes table ---------- */
const rows: [string, string, string][] = [["0.000", "0.000", "0.000"], ["6.000", "0.000", "0.000"], ["12.000", "0.000", "0.000"], ["18.000", "0.000", "0.000"], ["24.000", "0.000", "0.000"], ["30.000", "0.000", "0.000"], ["0.000", "-5.000", "0.000"]];
const tabs = ["Nœuds", "Lignes", "Matériaux", "Surfaces", "Solides", "Ouvertures", "Appuis nodaux", "Appuis linéiques", "Appuis de surface", "Articulations linéiques", "Sections", "Articulations de barre", "Excentrement de barre", "Divisions de barre", "Barres", "Fondations élastiques de barre", "Non-linéarités de barre"];

const Chev = ({ up }: { up?: boolean }) => (
  <svg viewBox="0 0 9 6" className="h-[6px] w-[9px]" aria-hidden="true"><path d={up ? "M1 5l3.5-3.5L8 5" : "M1 1l3.5 3.5L8 1"} fill="none" stroke="#404040" strokeWidth="1.8" /></svg>
);
function Scroll() {
  return (
    <div className="flex w-4 shrink-0 flex-col items-center border-r border-[#909090] bg-[#f0f0f0]">
      <button aria-label="Haut" className="flex h-[17px] items-center"><Chev up /></button>
      <span className="h-[17px] w-full bg-[#cdcdcd]" />
      <span className="flex-1" />
      <button aria-label="Bas" className="flex h-[17px] items-center"><Chev /></button>
    </div>
  );
}

const cell = "h-4 border-r border-b border-[#a0a0a0] p-0 leading-[15px] font-normal";
const keyCell = "h-4 border-r border-b border-[#686868] bg-[#e1e1e1] p-0 text-center leading-[13px] font-normal shadow-[inset_1px_1px_0_#fff,inset_-1px_-1px_0_#a8a8a8]";

function NodesDock() {
  return (
    <section className="mt-[5px] flex shrink-0 flex-col bg-[#f0f0f0]">
      <DockTitle>1.1 Nœuds</DockTitle>
      <div className="flex h-[25px] items-center overflow-hidden bg-linear-to-b from-[#e9edf7] to-[#cfd3dc] pl-2">
        <Tools items="*tedit tins ~tdown ~tbeam ~twave | tleft tright | *uo *uo2 ~refr | ~tplus ~tmul ~tdiv | ~tclr | rdel rl rr | yrows brows | ycal | hlist glasses excel calc | ab fx fxx | lock" />
      </div>
      <div className="border border-[#686868] border-l-[#f4f4f4] pt-[2px] pb-[18px] pl-px font-['Roboto',sans-serif] text-[11px] text-black">
        <div className="flex">
          <table className="min-w-0 flex-1 table-fixed border-separate border-spacing-0 border-t border-l border-[#686868]">
            <colgroup>
              <col className="w-[45px]" /><col className="w-[84px]" /><col className="w-[72px]" /><col className="w-[90px]" /><col className="w-[78px]" /><col className="w-[78px]" /><col className="w-[78px]" /><col />
            </colgroup>
            <thead>
              <tr>
                <th rowSpan={3} className="border-r border-b border-[#808080] bg-[#e1e1e1] p-0 leading-[14px] font-normal">Nœud<br />n°</th>
                {["A", "B", "C", "D", "E", "F", "G"].map((l) => (
                  <th key={l} className={`h-[15px] border-r border-b border-[#686868] p-0 leading-[13px] font-normal ${l === "A" ? "bg-[#0078d7] text-white" : "bg-[#e1e1e1] shadow-[inset_1px_1px_0_#fff,inset_-1px_0_0_#a8a8a8]"}`}>{l}</th>
                ))}
              </tr>
              <tr>
                <th className="h-4 border-r border-[#a0a0a0] p-0" />
                <th className="border-r border-[#a0a0a0] p-0 leading-4 font-normal">Nœud de</th>
                <th className="border-r border-[#a0a0a0] p-0 leading-4 font-normal">Système de</th>
                <th colSpan={3} className="border-r border-[#a0a0a0] p-0 leading-4 font-normal">Coordonnées du nœud</th>
                <th className="border-r border-[#a0a0a0] p-0" />
              </tr>
              <tr>
                {["Type de nœud", "référence", "coordonnées", "X [m]", "Y [m]", "Z [m]", "Commentaire"].map((h) => (
                  <th key={h} className="h-[17px] border-r border-b border-[#a0a0a0] p-0 leading-4 font-normal">{h}</th>
                ))}
              </tr>
            </thead>
            <tbody>
              {rows.map((r, i) => (
                <tr key={i} className={i === 0 ? "bg-[#ffffc0]" : i === 2 ? "bg-[#ebebeb]" : "bg-white"}>
                  <th className={i === 0 ? "h-4 border-r border-b border-[#686868] bg-[#0078d7] p-0 leading-[14px] font-normal text-white" : keyCell}>{i + 1}</th>
                  <td className={`${cell} pl-1 ${i === 0 ? "outline-1 -outline-offset-1 outline-black outline-dotted" : ""}`}>Standard</td>
                  <td className={`${cell} text-center`}>0</td>
                  <td className={`${cell} pl-1`}><span className="underline">C</span>artésien</td>
                  {r.map((v, j) => <td key={j} className={`${cell} pr-1 text-right`}>{v}</td>)}
                  <td className={cell} />
                </tr>
              ))}
            </tbody>
          </table>
          <div className="flex pl-[2px]"><Scroll /></div>
        </div>
      </div>
      <div className="flex h-[35px] items-start font-['Liberation_Sans',sans-serif] text-[10px] text-black">
        <div role="tablist" className="flex min-w-0 overflow-hidden">
          {tabs.map((t, i) => (
            <button key={t} role="tab" aria-selected={i === 0} className={`h-[17px] shrink-0 px-[5px] whitespace-nowrap ${i === 0 ? "mr-[2px] bg-[#f0f0f0]" : "mr-px rounded-b-[4px] border-r border-b border-l border-[#707070] bg-[#e6e6e6]"}`}>{t}</button>
          ))}
        </div>
        <span className="flex-1" />
        <div className="flex shrink-0">
          {["M3 2v8M10 2L5 6l5 4z", "M9 2L4 6l5 4z", "M4 2l5 4-5 4z", "M3 2l5 4-5 4zM10 2v8"].map((d, i) => (
            <button key={d} aria-label={`Défilement ${i + 1}`} className="flex h-[17px] w-4 items-center justify-center border-r border-b border-[#707070] bg-[#f0f0f0] shadow-[inset_1px_1px_0_#fff]">
              <svg viewBox="0 0 12 12" className={i < 2 ? "size-[10px] fill-[#a0a0a0] stroke-[#a0a0a0]" : "size-[10px] fill-black stroke-black"}><path d={d} /></svg>
            </button>
          ))}
        </div>
      </div>
    </section>
  );
}

/* ---------- legend panel ---------- */
function Legend() {
  return (
    <aside className="flex w-[156px] shrink-0 flex-col">
      <DockTitle>Panneau</DockTitle>
      <div className="flex min-h-0 flex-1 flex-col border border-[#8c929e] bg-[#e9edf5] px-1 pt-[3px] pb-[2px] font-['Liberation_Sans',sans-serif] text-[11px] text-black">
        <div className="flex min-h-0 flex-1 flex-col overflow-hidden bg-[#f0f0f0]">
          <div className="pt-1 pb-[2px] text-[10px] leading-[14px] whitespace-nowrap">Visibilités définies par l'utilisateur</div>
          <ul className="min-h-0 flex-1 border-t border-l border-[#909090] bg-white px-[3px] pt-[2px]">
            {floors.map(([f, c], i) => (
              <li key={f} className={`mb-[2px] flex h-4 items-center pl-[2px] ${i === 0 ? "bg-[#ffffe1] outline-1 outline-[#d8d8d0]" : ""}`}>
                <span className={`mr-[5px] h-[14px] w-[15px] border border-[#d8d8d8] ${c}`} />Decken - {f}
              </li>
            ))}
          </ul>
          <div className="py-[6px] pl-px"><Btn k="copyp" /></div>
        </div>
      </div>
      <div className="h-[23px] pl-[3px]">
        <button aria-label="Légende" className="flex h-5 w-6 flex-col items-center justify-center gap-px rounded-b-[4px] border border-t-0 border-[#c4dce0] bg-[#f4f5f8]">
          <span className="h-[4px] w-[14px] border border-[#202060] bg-[#0000ff]" />
          <span className="h-[4px] w-[14px] border border-[#206020] bg-[#00f000]" />
          <span className="h-[4px] w-[14px] border border-[#602020] bg-[#ff0000]" />
        </button>
      </div>
    </aside>
  );
}

/* ---------- dialog ---------- */
const kinds = ["Matériaux", "Sections", "Types de barre", "Articulations de barre", "Types de surfaces - Géométrie", "Types de surfaces - Rigidité", "Épaisseur de la surface", "Types de solide", "Côtés de surface", "Visibilités définies par l'utilisateur", "Facteur de longueur efficace"];
const after = ["Polices", "Données de modèle", "Charges", "Résultats", "Général", "Modules additionnels"];
const colors: [string, string][] = [
  ["bg-[#6699ff]", "Défini par l'utilisateur - Decken - E-01"],
  ["bg-[#f8c400]", "Défini par l'utilisateur - Decken - E-02"],
  ["bg-[#b87070]", "Défini par l'utilisateur - Decken - E-03"],
  ["bg-[#78b800]", "Défini par l'utilisateur - Decken - E-04"],
  ["bg-[#ff0000]", "Défini par l'utilisateur - Decken - E-05"],
  ["bg-[#8888ff]", "Généré - Barres par matériau - 1 - Béton C20/25"],
  ["bg-[#986828]", "Généré - Barres par section - 1 - Rectangle 300/300"],
  ["bg-[#306000]", "Généré - Barres par type - Poutre"],
  ["bg-[#f0c8a0]", "Généré - Lignes avec appui - 1 - G; OOO OOO"],
  ["bg-[#98cccc]", "Généré - Lignes par type - Polyligne"],
  ["bg-[#e87830]", "Généré - Nœuds avec appui - 1 - OOO OOO"],
  ["bg-[#209890]", "Généré - Surfaces par excentrement - 0 mm"],
  ["bg-[#646870]", "Généré - Surfaces par géométrie - Plane"],
  ["bg-[#b8dc80]", "Généré - Surfaces par matériau - 1 - Béton C20/25"],
  ["bg-[#e0e0ff]", "Généré - Surfaces par matériau - 2 - Béton C20/25"],
  ["bg-[#3300cc]", "Généré - Surfaces par rigidité - Standard"],
  ["bg-[#ffff00]", "Généré - Surfaces par épaisseur - 200 mm"],
  ["bg-[#a05800]", "Généré - Surfaces par épaisseur - 300 mm"],
  ["bg-[#cc99ff]", ""], ["bg-[#fff4dc]", ""], ["bg-[#847464]", ""], ["bg-[#f0ffb8]", ""], ["bg-[#68709c]", ""], ["bg-[#ffcccc]", ""],
];
const head = "flex h-4 shrink-0 items-center bg-[#dbe4f4] pl-[2px] text-[#1c4878] [clip-path:polygon(0_0,calc(100%-10px)_0,100%_10px,100%_100%,0_100%)]";

function Dialog() {
  return (
    <div role="dialog" aria-label="Propriétés d'affichage" className="absolute top-[179px] left-[506px] w-[850px] border border-[#0078d7] bg-[#f0f0f0] font-['Roboto',sans-serif] text-[11px] text-black shadow-[0_4px_22px_rgba(0,0,0,0.4)]">
      <div className="flex h-[30px] items-center justify-between bg-[#0078d7] pr-[9px] pl-2 font-['Liberation_Sans',sans-serif] text-[12px] text-white">
        Propriétés d'affichage - Standard - White
        <button aria-label="Fermer"><Cross className="size-[12px] stroke-white" /></button>
      </div>
      <div className="flex gap-[7px] px-2 pt-2">
        <div className="flex w-[345px] shrink-0 flex-col border-r border-b border-[#a8a8e8] font-['Liberation_Sans',sans-serif]">
          <div className={head}>Catégorie</div>
          <div className="flex-1 border-t border-l border-[#909090] bg-white pl-[3px]">
            {["Couleurs", "Objets par couleur"].map((t, i) => (
              <div key={t} className="flex h-4 items-center"><Guide g={i ? "t" : "f"} box={i ? "-" : "+"} /><span className="pl-[2px]">{t}</span></div>
            ))}
            {kinds.map((t, i) => (
              <div key={t} className="relative flex h-4 items-center">
                <Guide g="v" />
                <Guide g={i === 10 ? "l" : "t"} box={i === 10 ? "+" : undefined} />
                {i === 9 ? (
                  <>
                    <span className="bg-[#0078d7] pl-px leading-4 text-white outline-1 -outline-offset-1 outline-[#e09850] outline-dotted">{t}</span>
                    <span className="absolute -top-[5px] left-[27px] z-10 h-[27px] w-[178px] border-3 border-[#e84848]" />
                  </>
                ) : (
                  <span className="pl-px">{t}</span>
                )}
              </div>
            ))}
            {after.map((t, i) => (
              <div key={t} className="flex h-4 items-center"><Guide g={i === 5 ? "l" : "t"} box="+" /><span className="pl-[2px]">{t}</span></div>
            ))}
          </div>
        </div>
        <div className="min-w-0 flex-1">
          <div role="tablist" className="flex items-end">
            <button role="tab" aria-selected="true" className="relative z-10 -mb-px h-[22px] w-[46px] border border-b-0 border-[#dcdcdc] bg-white pb-[2px]">Écran</button>
            <button role="tab" aria-selected="false" className="h-[18px] w-[108px] border border-b-0 border-l-0 border-[#dcdcdc] bg-[#f2f2f2]">Rapport d'impression</button>
          </div>
          <div className="border border-[#dcdcdc] bg-white px-[5px] pt-2 pb-[5px]">
            <div className="border-r border-b border-[#a8a8e8] bg-[#f0f3f9]">
              <div className={head}>Objets par couleur - Visibilités définies par l'utilisateur</div>
              <div className="flex bg-[#f0f0f0]">
                <table className="min-w-0 flex-1 table-fixed border-separate border-spacing-0 border-t border-l border-[#909090]">
                  <colgroup><col className="w-[45px]" /><col className="w-[54px]" /><col /></colgroup>
                  <thead>
                    <tr>
                      <th className="h-8 border-r border-b border-[#a0a0a0] bg-[#e1e1e1] p-0 pt-2 font-normal">n°</th>
                      <th className="border-r border-b border-[#a0a0a0] p-0 pt-[14px] font-normal">Couleur</th>
                      <th className="border-r border-b border-[#a0a0a0] p-0 pt-[14px] font-normal">Visibilité</th>
                    </tr>
                  </thead>
                  <tbody>
                    {colors.map(([c, t], i) => (
                      <tr key={i}>
                        <th className={keyCell}>{i + 1}</th>
                        <td className={cell}><span className={`mx-auto block size-[13px] border border-[#404040] ${c}`} /></td>
                        <td className={`${cell} pl-1 whitespace-nowrap`}>{t}</td>
                      </tr>
                    ))}
                  </tbody>
                </table>
                <div className="flex px-px"><Scroll /></div>
              </div>
              <div className="flex justify-between pt-[5px] pr-[3px] pb-[2px] pl-[46px]"><Btn k="palette" /><Btn k="copyp" /></div>
            </div>
          </div>
          <div className="mt-[11px] flex gap-2">
            <fieldset className="h-[46px] w-[315px] border-r border-b border-[#a8a8e8] bg-[#f0f3f9]">
              <div className={head}>Paramètres identiques</div>
              <div className="border-t border-white pt-[6px] pl-[3px] font-['Liberation_Sans',sans-serif]"><Check label="Pour l'écran et le rapport d'impression" /></div>
            </fieldset>
            <div className="flex-1 border border-[#a8a8e8] border-t-[#dbe4f4] border-l-[#dbe4f4] bg-[#f0f3f9]" />
          </div>
        </div>
      </div>
      <div className="mx-2 mt-2 flex items-center gap-[9px] border-t border-[#a0a0a0] pt-[11px] pb-[9px] shadow-[inset_0_1px_0_#fff]">
        <Btn k="help" /><Btn k="edit" off /><Btn k="units" /><Btn k="copyp" />
        <span className="flex-1" />
        <button className="h-[21px] w-[73px] border-2 border-[#0078d7] bg-[#e1e1e1]">OK</button>
        <button className="h-[21px] w-[73px] border border-[#adadad] bg-[#e1e1e1]">Annuler</button>
      </div>
      <svg viewBox="0 0 12 12" className="absolute right-0 bottom-0 size-3" aria-hidden="true"><path d="M0 12L12 0M4 12L12 4M8 12L12 8" stroke="#909090" /></svg>
    </div>
  );
}

/* ---------- window ---------- */
const menu: [string, string, string][] = [["Fic", "h", "ier"], ["", "M", "odifier"], ["", "A", "fficher"], ["", "I", "nsérer"], ["", "C", "alculer"], ["", "R", "ésultats"], ["", "O", "utils"], ["", "T", "ableau"], ["O", "p", "tions"], ["Mod", "u", "les additionnels"], ["", "F", "enêtre"], ["Ai", "d", "e"]];
const modes: [string, string][] = [["SAISIE", "w-10"], ["GRILLE", "w-11"], ["CARTES", "w-14"], ["SAISIE D'OB.", "w-[73px]"], ["GLIGNES", "w-[54px]"], ["DXF", "w-7"]];

export default function App() {
  return (
    <div className="relative flex h-screen flex-col overflow-hidden bg-[#cfd4dd]">
      <header className="flex h-[23px] shrink-0 items-center bg-white pr-5 pl-[3px] font-['Noto_Sans',sans-serif] text-[11px] text-[#8c8c8c]">
        <Icon k="logo" />
        <span className="flex-1 pl-1">RFEM 5.23.01 x64 - [004749-model-file*]</span>
        <div className="flex items-center gap-[35px]">
          <button aria-label="Réduire" className="h-px w-[10px] bg-[#808080]" />
          <button aria-label="Restaurer"><svg viewBox="0 0 11 11" className="size-[11px] fill-none stroke-[#808080]"><path d="M.5 2.5h8v8h-8zM2.5 2V.5h8v8H9" /></svg></button>
          <button aria-label="Quitter"><Cross className="size-[11px] stroke-[#808080]" /></button>
        </div>
      </header>
      <nav className="flex h-6 shrink-0 items-center gap-[15px] pr-1 pl-1 font-['Noto_Sans',sans-serif] text-[11px] text-[#44485c]">
        <span className="-mr-[5px] flex items-center">
          <span className="mr-[3px] h-4 border-l-2 border-dotted border-[#9aa1ae]" />
          <svg viewBox="0 0 17 12" className="h-3 w-[17px] bg-[#182858]" aria-hidden="true"><path d="M1 8.5h15M1 8L6 2l2 6M8 8l4-4 4 4M6 2v9M12 4v7" fill="none" stroke="#fff" /></svg>
        </span>
        {menu.map(([a, b, c]) => (
          <button key={a + b + c} className="whitespace-nowrap">{a}<span className="underline underline-offset-2">{b}</span>{c}</button>
        ))}
        <span className="flex-1" />
        <div className="flex items-center gap-2 self-end pb-1 text-[#505050]">
          <button aria-label="Réduire le document" className="mt-[6px] h-[2px] w-[7px] bg-[#606468]" />
          <button aria-label="Restaurer le document"><svg viewBox="0 0 10 9" className="h-[9px] w-[10px] fill-none stroke-[#707478]"><path d="M.5 3.5h7v4h-7zM2 1.5h7.5v5" strokeWidth="1.2" /></svg></button>
          <button aria-label="Fermer le document"><Cross className="size-[9px] stroke-[#606468]" /></button>
        </div>
      </nav>
      <div className="flex shrink-0">
        <Bar>
          <Tools items="newdoc open boxo boxb save sheet print preview | undo redo | selpar selcirc selring selbox selyel | *tlist *ttab | loadnew" />
          <div className="relative mx-[2px] flex">
            <select aria-label="Cas de charge" className="h-[19px] w-[216px] appearance-none border border-[#a8adb6] bg-[#eeeeee]" />
            <span className="pointer-events-none absolute top-[7px] right-[5px] border-x-[3px] border-t-4 border-x-transparent border-t-[#60656f]" />
          </div>
          <Tools items="tril trir ~eyep ~xxl ~eyeb ~xxb | glasses abacusn ~abacus" />
        </Bar>
        <Bar items="handgrid snap *pl1 pl2 pl3 net axes | moveo rot mirror cross info gearp gears" />
        <Bar items="rx1 rx2 rx3 rx3" />
      </div>
      <div className="flex shrink-0">
        <Bar items="node v line member v poly v | sup sup2 surfs | dim v xx frame | surf v opening v inter v solid solidn v | rig v nload mload sload ssload gload v" />
        <Bar items="hand zoomr zoomx cubew cubes | vx vy vz vmx v scope v | rotb v" />
        <Bar items="~zig ~chip | ~ibeam ~rainb ~heat ~garr ~blade four v ~isec ~stack | *legend spray v results v" />
      </div>
      <main className="flex min-h-0 flex-1">
        <Navigator />
        <div className="ml-[4px] flex min-w-0 flex-1 flex-col">
          <div className="relative min-h-0 flex-1 border-t-2 border-r border-b border-l-2 border-[#707478] border-r-white border-b-white bg-white">
            <svg viewBox="0 0 56 66" className="absolute bottom-[62px] left-[50px] h-[66px] w-[56px]" aria-hidden="true">
              <path d="M5 11L29 7" stroke="#e00000" strokeWidth="2" /><path d="M28 4l10 2-9 4z" fill="#b00000" />
              <path d="M5 11l16 5" stroke="#00e000" strokeWidth="2" /><path d="M20 12l8 6-10 1z" fill="#00a800" />
              <path d="M5 11v33" stroke="#0000e0" strokeWidth="2" /><path d="M2 42h6l-3 9z" fill="#0000a0" />
              <g fontFamily="'Liberation Sans', sans-serif" fontSize="9">
                <text x="43" y="9" fill="#f00000">X</text><text x="30" y="24" fill="#00d800">Y</text><text x="2" y="64" fill="#0000e0">Z</text>
              </g>
            </svg>
          </div>
          <NodesDock />
        </div>
        <div className="w-[6px] shrink-0" />
        <Legend />
      </main>
      <footer className="flex h-[22px] shrink-0 items-stretch border-t border-[#a4a9b2] bg-linear-to-b from-[#d8dce5] via-[#a6abb5] to-[#b2b7c0] pt-[2px] font-['Liberation_Sans',sans-serif] text-[11px] text-[#303848]">
        <span className="flex-1" />
        <div className="flex gap-px">
          {modes.map(([m, w], i) => (
            <button key={m} className={`border text-center leading-[13px] whitespace-nowrap ${w} ${i === 1 ? "border-[#d8dce4] border-r-[#808080] border-b-[#808080]" : "border-t-2 border-l-2 border-[#f0f0f4] border-t-[#202020] border-l-[#202020] bg-[#b4b9c3]"}`}>{m}</button>
          ))}
        </div>
        {["w-[190px]", "w-[88px]", "w-[74px]", "w-[74px]", "w-[73px]"].map((w, i) => (
          <span key={i} className={`${w} ${i < 4 ? "border-r border-[#9499a4]" : ""}`} />
        ))}
      </footer>
      <Dialog />
    </div>
  );
}
